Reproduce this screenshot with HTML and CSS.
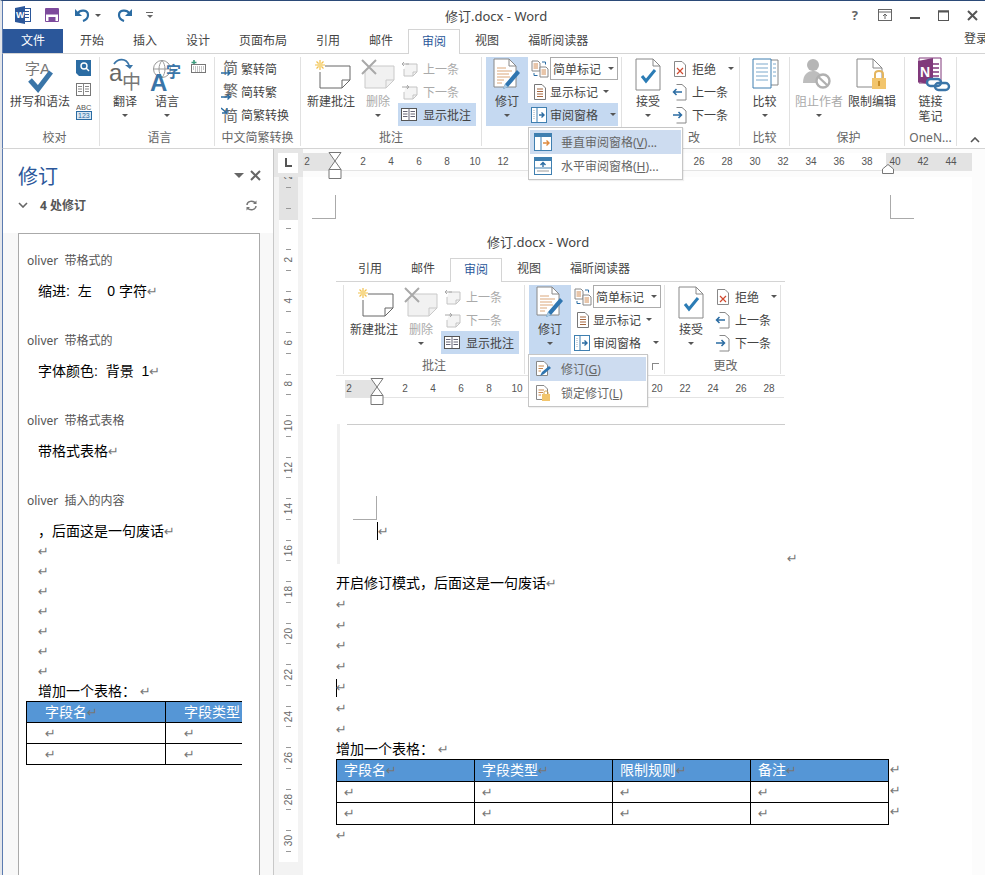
FILE: index.html
```html
<!DOCTYPE html>
<html lang="zh-CN">
<head>
<meta charset="utf-8">
<title>修订.docx - Word</title>
<link rel="stylesheet" href="styles.css">
</head>
<body>
<svg class="defs" xmlns="http://www.w3.org/2000/svg">
<symbol id="note-new" viewBox="0 0 40 36"><g fill="none" stroke="#f2c14e" stroke-width="1.2"><path d="M9 3V13M4 8H14M5.500 4.500L12.500 11.500M12.500 4.500L5.500 11.500"/></g><circle cx="9" cy="8" r="2.500" fill="#f7d98a"/><path d="M14 9H39V23L31 31H9V15M31 31V23H39" fill="none" stroke="#666"/></symbol>
<symbol id="note-del" viewBox="0 0 40 36"><path d="M12 9H36V23L28 31H7V14M28 31V23H36" fill="#f1f1f1" stroke="#c9c9c9"/><path d="M4 3L18 17M18 3L4 17" stroke="#a9a9a9" stroke-width="2"/></symbol>
<symbol id="note-prev" viewBox="0 0 20 18"><path d="M6 4H17V12L13 16H4V9M13 16V12H17" fill="#f4f4f4" stroke="#c4c4c4"/><path d="M9 4H2M4 2L2 4L4 6" fill="none" stroke="#a8a8a8"/></symbol>
<symbol id="note-next" viewBox="0 0 20 18"><path d="M6 4H17V12L13 16H4V9M13 16V12H17" fill="#f4f4f4" stroke="#c4c4c4"/><path d="M2 4H9M7 2L9 4L7 6" fill="none" stroke="#a8a8a8"/></symbol>
<symbol id="note-show" viewBox="0 0 16 14"><rect x=".5" y=".5" width="15" height="12" fill="#fff" stroke="#555"/><path d="M8 .5V12.500M2 3.500H6.500M2 6H6.500M2 8.500H6.500M9.500 3.500H14M9.500 6H14M9.500 8.500H14" stroke="#667"/></symbol>
<symbol id="track" viewBox="0 0 30 36"><path d="M2 2H17L24 9V30H2Z" fill="#fff" stroke="#888"/><path d="M17 2V9H24" fill="none" stroke="#888"/><path d="M5 11H14M5 14H20M5 17H17M5 20H18M5 23H12M5 26H10" stroke="#dba77a"/><path d="M11 32L13 27L25 13L28 16L16 30Z" fill="#2f75b0"/><path d="M11 32L13 27L16 30Z" fill="#a9c9e2"/></symbol>
<symbol id="simple" viewBox="0 0 18 18"><path d="M1 1H7L9 3V11H1Z" fill="#fff" stroke="#888"/><path d="M9 7H15L17 9V17H9Z" fill="#fff" stroke="#888"/><path d="M2.500 4H7M2.500 6H7M2.500 8H7M10.500 10H15M10.500 12H15M10.500 14H15" stroke="#d18c54"/><path d="M11 2H14.500V4.500M3 13V15.500H6.500" fill="none" stroke="#2b6ca3"/></symbol>
<symbol id="markup" viewBox="0 0 14 16"><path d="M1.500 .5H9L12.500 4V15.500H1.500Z" fill="#fff" stroke="#777"/><path d="M4 5H10M4 7.500H10M4 10H10M4 12.500H10" stroke="#a5673f"/></symbol>
<symbol id="pane" viewBox="0 0 16 16"><rect x=".5" y=".5" width="15" height="15" fill="#fff" stroke="#3f7fb0"/><path d="M6 .5V15.500" stroke="#3f7fb0"/><path d="M3 3V13" stroke="#9ab" stroke-dasharray="1 1"/><path d="M8 8H13M10.500 5.500L13 8L10.500 10.500" fill="none" stroke="#2b6ca3" stroke-width="1.400"/></symbol>
<symbol id="pane-v" viewBox="0 0 18 18"><rect x=".5" y=".5" width="17" height="17" fill="#fff" stroke="#3f7fb0"/><rect x="1" y="1" width="16" height="3" fill="#3f7fb0"/><path d="M7 4V17" stroke="#3f7fb0"/><path d="M9 10H15M12.500 7.500L15 10L12.500 12.500" fill="none" stroke="#e08b3e" stroke-width="1.400"/></symbol>
<symbol id="pane-h" viewBox="0 0 18 18"><rect x=".5" y=".5" width="17" height="17" fill="#fff" stroke="#3f7fb0"/><rect x="1" y="1" width="16" height="3" fill="#3f7fb0"/><path d="M1 11H17" stroke="#3f7fb0"/><path d="M9 10V5.500M6.500 8L9 5.500L11.500 8" fill="none" stroke="#2b6ca3" stroke-width="1.400"/><path d="M3 14H15" stroke="#999"/></symbol>
<symbol id="accept" viewBox="0 0 40 36"><path d="M8 2H25L32 9V33H8Z" fill="#fff" stroke="#888"/><path d="M25 2V9H32" fill="none" stroke="#888"/><path d="M14 19L18 24L27 13" fill="none" stroke="#2b7cb5" stroke-width="3"/></symbol>
<symbol id="reject" viewBox="0 0 16 16"><path d="M2.500 .5H10L13.500 4V15.500H2.500Z" fill="#fff" stroke="#888"/><path d="M5 7L11 13M11 7L5 13" stroke="#d0492f" stroke-width="1.200"/></symbol>
<symbol id="doc-prev" viewBox="0 0 16 18"><path d="M4.500 1.500H10L14 5V17H4.500" fill="#fff" stroke="#888"/><path d="M10 9H1.500M4.500 6L1.500 9L4.500 12" fill="none" stroke="#2b6ca3" stroke-width="1.500"/></symbol>
<symbol id="doc-next" viewBox="0 0 16 18"><path d="M4.500 1.500H10L14 5V17H4.500" fill="#fff" stroke="#888"/><path d="M1 9H9.500M6.500 6L9.500 9L6.500 12" fill="none" stroke="#2b6ca3" stroke-width="1.500"/></symbol>
<symbol id="compare" viewBox="0 0 40 36"><path d="M16 3H33V28H16Z" fill="#fff" stroke="#888"/><path d="M8 2H26V31H8Z" fill="#fff" stroke="#3f7fb0"/><path d="M11 7H23M11 11H23M11 15H23M11 19H23M11 23H23M28 7H31M28 11H31M28 15H31M28 19H31" stroke="#7ca9cc"/></symbol>
<symbol id="block" viewBox="0 0 52 36"><circle cx="20" cy="8" r="6" fill="#b5b5b5"/><path d="M10 26C10 17 15 14 20 14C24 14 27 16 28 19L23 26Z" fill="#bdbdbd"/><circle cx="30" cy="24" r="6.500" fill="#fff" stroke="#b0b0b0" stroke-width="2.400"/><path d="M25.500 20L34.500 28.500" stroke="#b0b0b0" stroke-width="2.400"/></symbol>
<symbol id="restrict" viewBox="0 0 52 36"><path d="M11 2H27L36 11V30H11Z" fill="#fff" stroke="#888"/><path d="M27 2V11H36" fill="none" stroke="#888"/><path d="M29 21V17C29 13 37 13 37 17V21" fill="none" stroke="#e3b45d" stroke-width="2"/><rect x="26" y="21" width="14" height="11" fill="#f2c56d"/><rect x="32" y="24" width="2" height="5" fill="#c98f2b"/></symbol>
<symbol id="onenote" viewBox="0 0 52 36"><path d="M14 1H36V26H14Z" fill="#fff" stroke="#80397b"/><path d="M28 7H34M28 11H34M28 15H34M28 19H34" stroke="#80397b" stroke-width="1.400"/><path d="M13 4L28 1V28L13 25Z" fill="#80397b"/><text class="svg-bold" x="15" y="20" font-size="14" fill="#fff">N</text><rect x="22" y="22" width="14" height="7" rx="3.500" fill="#fff" stroke="#3a75a8" stroke-width="2.400"/><rect x="30" y="26" width="14" height="7" rx="3.500" fill="none" stroke="#3a75a8" stroke-width="2.400"/></symbol>
<symbol id="menu-track" viewBox="0 0 18 18"><path d="M2.500 1.500H10L13.500 5V15.500H2.500Z" fill="#fff" stroke="#888"/><path d="M4.500 6H10M4.500 8.500H9M4.500 11H7" stroke="#c9884f"/><path d="M6 16L8 12L15 6L17 8L10 14Z" fill="#2f75b0"/></symbol>
<symbol id="menu-lock" viewBox="0 0 18 18"><path d="M2.500 1.500H10L13.500 5V15.500H2.500Z" fill="#fff" stroke="#888"/><path d="M4.500 6H10M4.500 8.500H9M4.500 11H7" stroke="#c9884f"/><rect x="8" y="10" width="8" height="7" fill="#f2c56d"/><path d="M10 10V8.500C10 6.500 14 6.500 14 8.500V10" fill="none" stroke="#d6a24a"/></symbol>
<symbol id="hourglass" viewBox="0 0 14 27"><path d="M1 .5H13L7 9ZM7 9L13 17.500V26.500H1V17.500ZM1 17.500H13" fill="#fff" stroke="#777"/></symbol>
</svg>

<div class="window">

<div class="titlebar">
	<svg class="qa qa-word" width="16" height="18" viewBox="0 0 16 18"><rect x="5.500" y="2.500" width="10" height="13" fill="#fff" stroke="#2b579a"/><path d="M10 5.500H14M10 8.500H14M10 11.500H14" stroke="#2b579a"/><path d="M0 2L10 0V18L0 16Z" fill="#2b579a"/><text class="svg-bold" x="1" y="12" font-size="9" fill="#fff">W</text></svg>
	<svg class="qa qa-save" width="14" height="14" viewBox="0 0 14 14"><path d="M.5.5H13.500V13.500H.5Z" fill="#fff" stroke="#7d4a9c"/><rect x="1" y="1" width="12" height="5.500" fill="#7d4a9c"/><rect x="3.500" y="9" width="7" height="4.500" fill="#7d4a9c"/></svg>
	<svg class="qa qa-undo" width="16" height="14" viewBox="0 0 16 14"><path d="M4 5C6 1.500 14 1.500 14 7C14 10 12 12 9 13" fill="none" stroke="#2b6ca3" stroke-width="2.200"/><path d="M1 1V8H8Z" fill="#2b6ca3"/></svg>
	<span class="caret qa-caret"></span>
	<svg class="qa qa-redo" width="16" height="14" viewBox="0 0 16 14"><path d="M12 5C10 1.500 2 1.500 2 7C2 10 4 12 7 13" fill="none" stroke="#2b6ca3" stroke-width="2.200"/><path d="M15 1V8H8Z" fill="#2b6ca3"/></svg>
	<span class="qa-more"></span>
	<div class="doc-title">修订.docx - Word</div>
	<div class="winbtns">
		<span class="help">?</span>
		<svg width="14" height="12" viewBox="0 0 14 12"><rect x=".5" y=".5" width="13" height="11" fill="none" stroke="#666"/><path d="M.5 3H13.500M7 10V5M5 7L7 5L9 7" fill="none" stroke="#666"/></svg>
		<svg width="10" height="12" viewBox="0 0 10 12"><path d="M0 9H10" stroke="#555" stroke-width="2"/></svg>
		<svg width="11" height="11" viewBox="0 0 11 11"><rect x=".5" y="1" width="10" height="9.500" fill="none" stroke="#555"/><path d="M0 1.500H11" stroke="#555" stroke-width="2"/></svg>
		<svg width="11" height="11" viewBox="0 0 11 11"><path d="M1 1L10 10M10 1L1 10" stroke="#555" stroke-width="2"/></svg>
	</div>
</div>

<div class="tabs">
	<div class="tab-file">文件</div>
	<div class="tab">开始</div>
	<div class="tab">插入</div>
	<div class="tab">设计</div>
	<div class="tab">页面布局</div>
	<div class="tab">引用</div>
	<div class="tab">邮件</div>
	<div class="tab active">审阅</div>
	<div class="tab">视图</div>
	<div class="tab">福昕阅读器</div>
	<div class="tab-login">登录</div>
</div>

<div class="ribbon">
	<div class="grp g-proof">
		<div class="grp-body">
			<div class="big w-spell">
				<svg width="60" height="36" viewBox="0 0 60 36"><text class="svg-text" x="15" y="17" font-size="15" fill="#777">字A</text><path d="M20 23L28 32L41 15" fill="none" stroke="#3a75a8" stroke-width="5"/></svg>
				<span class="label">拼写和语法</span>
			</div>
			<div class="mini-col">
				<svg width="15" height="16" viewBox="0 0 15 16"><path d="M0 0H15V16H3L0 13Z" fill="#2b6ca3"/><circle cx="8" cy="6" r="3" fill="none" stroke="#fff" stroke-width="1.400"/><path d="M10 8L13 11" stroke="#fff" stroke-width="1.400"/></svg>
				<svg width="15" height="13" viewBox="0 0 15 13"><rect x=".5" y=".5" width="14" height="12" fill="#fff" stroke="#777"/><path d="M7.500 .5V12.500M2 3.500H6M2 6H6M2 8.500H6M9 3.500H13M9 6H13M9 8.500H13" stroke="#888"/></svg>
				<svg width="16" height="17" viewBox="0 0 16 17"><text class="svg-text" x="0" y="7" font-size="7.500" fill="#555">ABC</text><rect x=".5" y="8.500" width="15" height="8" fill="#d8e7f3" stroke="#2b6ca3"/><text class="svg-text" x="2" y="15" font-size="7" fill="#2b6ca3">123</text></svg>
			</div>
		</div>
		<div class="grp-label">校对</div>
	</div>
	<div class="grp g-lang">
		<div class="grp-body">
			<div class="big w-40">
				<svg width="40" height="36" viewBox="0 0 40 36"><text class="svg-text" x="4" y="24" font-size="24" fill="#666">a</text><text class="svg-text" x="17" y="32" font-size="19" fill="#777">中</text><path d="M9 7C13 1 21 1 24 8" fill="none" stroke="#3a75a8" stroke-width="1.800"/><path d="M20 8H28L25 12Z" fill="#3a75a8"/></svg>
				<span class="label">翻译</span>
				<span class="caret"></span>
			</div>
			<div class="big w-44">
				<svg width="44" height="36" viewBox="0 0 44 36"><circle cx="17" cy="12" r="8.500" fill="none" stroke="#999"/><path d="M8.500 12H26M17 3.500C13 8 13 16 17 20.500M17 3.500C21 8 21 16 17 20.500" fill="none" stroke="#999"/><text class="svg-bold" x="5" y="34" font-size="24" fill="#3a75a8">A</text><text class="svg-bold" x="21" y="20" font-size="15" fill="#3a75a8">字</text></svg>
				<span class="label">语言</span>
				<span class="caret"></span>
			</div>
			<div class="mini-col kbd">
				<svg width="15" height="13" viewBox="0 0 15 13"><path d="M3 0V5M.5 2.500H5.500" stroke="#3b9a7c" stroke-width="1.600"/><rect x=".5" y="4.500" width="14" height="8" fill="#fff" stroke="#777"/><path d="M2 7H13M2 9H13M4 11H11" stroke="#888" stroke-dasharray="1 1"/></svg>
			</div>
		</div>
		<div class="grp-label">语言</div>
	</div>
	<div class="grp g-conv">
		<div class="grp-body">
			<div class="rows">
				<div class="row"><svg width="17" height="20" viewBox="0 0 17 20"><text class="svg-text" x="2" y="14" font-size="15" fill="#666">简</text><path d="M0 14H9M6.500 11.500L9 14L6.500 16.500" fill="none" stroke="#2b6ca3" stroke-width="1.400"/></svg><span>繁转简</span></div>
				<div class="row"><svg width="17" height="20" viewBox="0 0 17 20"><text class="svg-text" x="2" y="14" font-size="15" fill="#666">繁</text><path d="M0 15H9M6.500 12.500L9 15L6.500 17.500" fill="none" stroke="#2b6ca3" stroke-width="1.400"/></svg><span>简转繁</span></div>
				<div class="row"><svg width="17" height="20" viewBox="0 0 17 20"><text class="svg-text" x="2" y="16" font-size="15" fill="#666">简</text><path d="M0 3L6 8M6 3V8H1" fill="none" stroke="#2b6ca3" stroke-width="1.400"/></svg><span>简繁转换</span></div>
			</div>
		</div>
		<div class="grp-label">中文简繁转换</div>
	</div>
	<div class="grp g-note">
		<div class="grp-body">
			<div class="big w-52">
				<svg width="40" height="36"><use href="#note-new"/></svg>
				<span class="label">新建批注</span>
			</div>
			<div class="big w-42 off">
				<svg width="40" height="36"><use href="#note-del"/></svg>
				<span class="label">删除</span>
				<span class="caret"></span>
			</div>
			<div class="rows">
				<div class="row off"><svg width="20" height="18"><use href="#note-prev"/></svg><span>上一条</span></div>
				<div class="row off"><svg width="20" height="18"><use href="#note-next"/></svg><span>下一条</span></div>
				<div class="row on"><svg class="ic-show" width="16" height="14"><use href="#note-show"/></svg><span>显示批注</span></div>
			</div>
		</div>
		<div class="grp-label">批注</div>
	</div>
	<div class="grp g-track">
		<div class="grp-body">
			<div class="big w-42 on">
				<svg width="30" height="36"><use href="#track"/></svg>
				<span class="label">修订</span>
				<span class="caret"></span>
			</div>
			<div class="rows r-track">
				<div class="row"><svg width="18" height="18"><use href="#simple"/></svg><span class="select">简单标记<span class="caret"></span></span></div>
				<div class="row"><svg class="ic-pad" width="14" height="16"><use href="#markup"/></svg><span>显示标记</span><span class="caret caret-near"></span></div>
				<div class="row on"><svg width="16" height="16"><use href="#pane"/></svg><span>审阅窗格</span><span class="caret caret-far"></span></div>
			</div>
		</div>
		<div class="grp-label"></div>
		<div class="menu menu-main">
			<div class="menu-item hot"><svg width="18" height="18"><use href="#pane-v"/></svg><span>垂直审阅窗格(<u>V</u>)...</span></div>
			<div class="menu-item"><svg width="18" height="18"><use href="#pane-h"/></svg><span>水平审阅窗格(<u>H</u>)...</span></div>
		</div>
	</div>
	<div class="grp g-change">
		<div class="grp-body">
			<div class="big w-40">
				<svg width="40" height="36"><use href="#accept"/></svg>
				<span class="label">接受</span>
				<span class="caret"></span>
			</div>
			<div class="rows r-change">
				<div class="row"><svg width="16" height="16"><use href="#reject"/></svg><span>拒绝</span><span class="caret caret-reject"></span></div>
				<div class="row"><svg width="16" height="18"><use href="#doc-prev"/></svg><span>上一条</span></div>
				<div class="row"><svg width="16" height="18"><use href="#doc-next"/></svg><span>下一条</span></div>
			</div>
		</div>
		<div class="grp-label grp-label-cut">改</div>
	</div>
	<div class="grp g-comp">
		<div class="grp-body">
			<div class="big w-fill">
				<svg width="40" height="36"><use href="#compare"/></svg>
				<span class="label">比较</span>
				<span class="caret"></span>
			</div>
		</div>
		<div class="grp-label">比较</div>
	</div>
	<div class="grp g-prot">
		<div class="grp-body">
			<div class="big w-52 off">
				<svg width="52" height="36"><use href="#block"/></svg>
				<span class="label">阻止作者</span>
				<span class="caret"></span>
			</div>
			<div class="big w-52">
				<svg width="52" height="36"><use href="#restrict"/></svg>
				<span class="label">限制编辑</span>
			</div>
		</div>
		<div class="grp-label">保护</div>
	</div>
	<div class="grp g-one">
		<div class="grp-body">
			<div class="big w-fill">
				<svg width="52" height="36"><use href="#onenote"/></svg>
				<span class="label">链接</span>
				<span class="label">笔记</span>
			</div>
		</div>
		<div class="grp-label">OneN...</div>
	</div>
	<svg class="collapse" width="10" height="6" viewBox="0 0 10 6"><path d="M1 5L5 1L9 5" fill="none" stroke="#555" stroke-width="1.600"/></svg>
</div>

<div class="work">
	<div class="side">
		<div class="side-title">
			<span>修订</span>
			<span class="side-drop"></span>
			<svg width="11" height="11" viewBox="0 0 11 11"><path d="M1 1L10 10M10 1L1 10" stroke="#666" stroke-width="2"/></svg>
		</div>
		<div class="side-count">
			<svg width="10" height="6" viewBox="0 0 10 6"><path d="M1 1L5 5L9 1" fill="none" stroke="#666" stroke-width="1.600"/></svg>
			<span>4 处修订</span>
			<svg class="refresh" width="11" height="11" viewBox="0 0 11 11"><path d="M1 5C1 1 7 0 9.500 3M10 6C10 10 4 11 1.500 8" fill="none" stroke="#777" stroke-width="1.500"/><path d="M10.500 .5V4H7ZM.5 10.500V7H4Z" fill="#777"/></svg>
		</div>
		<div class="side-box">
			<div class="rev-head">oliver  带格式的</div>
			<div class="rev-body">缩进:  左    0 字符<span class="ret">↵</span></div>
			<div class="rev-head">oliver  带格式的</div>
			<div class="rev-body">字体颜色:  背景  1<span class="ret">↵</span></div>
			<div class="rev-head">oliver  带格式表格</div>
			<div class="rev-body">带格式表格<span class="ret">↵</span></div>
			<div class="rev-head">oliver  插入的内容</div>
			<div class="rev-line">，后面这是一句废话<span class="ret">↵</span></div>
			<div class="rev-line"><span class="ret">↵</span></div>
			<div class="rev-line"><span class="ret">↵</span></div>
			<div class="rev-line"><span class="ret">↵</span></div>
			<div class="rev-line"><span class="ret">↵</span></div>
			<div class="rev-line"><span class="ret">↵</span></div>
			<div class="rev-line"><span class="ret">↵</span></div>
			<div class="rev-line"><span class="ret">↵</span></div>
			<div class="rev-line">增加一个表格： <span class="ret">↵</span></div>
			<table class="side-table">
				<tr class="head"><td>字段名<span class="ret">↵</span></td><td>字段类型</td></tr>
				<tr><td><span class="ret">↵</span></td><td><span class="ret">↵</span></td></tr>
				<tr><td><span class="ret">↵</span></td><td><span class="ret">↵</span></td></tr>
			</table>
		</div>
	</div>

	<div class="canvas">
		<div class="hr-row">
			<div class="corner"><div class="corner-box"><span class="tabstop"></span></div></div>
			<div class="hruler">
				<span>2</span><span></span><span>2</span><span>4</span><span>6</span><span>8</span><span>10</span><span>12</span><span></span><span></span><span></span><span></span><span></span><span></span><span>26</span><span>28</span><span>30</span><span>32</span><span>34</span><span>36</span><span>38</span><span>40</span><span>42</span><span>44</span>
				<svg class="hourglass" width="14" height="27"><use href="#hourglass"/></svg>
				<svg class="right-mark" width="12" height="10" viewBox="0 0 12 10"><path d="M6 .5L11.500 5V9.500H.5V5Z" fill="#fff" stroke="#777"/></svg>
			</div>
		</div>
		<div class="canvas-body">
			<div class="vruler">
				<div class="vcell"><span>2</span></div><div class="vcell"><span></span></div><div class="vcell"><span>2</span></div><div class="vcell"><span>4</span></div><div class="vcell"><span>6</span></div><div class="vcell"><span>8</span></div><div class="vcell"><span>10</span></div><div class="vcell"><span>12</span></div><div class="vcell"><span>14</span></div><div class="vcell"><span>16</span></div><div class="vcell"><span>18</span></div><div class="vcell"><span>20</span></div><div class="vcell"><span>22</span></div><div class="vcell"><span>24</span></div><div class="vcell"><span>26</span></div><div class="vcell"><span>28</span></div><div class="vcell"><span>30</span></div>
			</div>
			<div class="page">
				<div class="crops">
					<div class="crop crop-l"></div>
					<div class="crop crop-r"></div>
				</div>
				<div class="shot">
					<div class="shot-title">修订.docx - Word</div>
					<div class="tabs shot-tabs">
						<div class="tab">引用</div>
						<div class="tab">邮件</div>
						<div class="tab active">审阅</div>
						<div class="tab">视图</div>
						<div class="tab">福昕阅读器</div>
					</div>
					<div class="ribbon shot-ribbon">
						<div class="grp g-note first">
							<div class="grp-body">
								<div class="big w-52">
									<svg width="40" height="36"><use href="#note-new"/></svg>
									<span class="label">新建批注</span>
								</div>
								<div class="big w-42 off">
									<svg width="40" height="36"><use href="#note-del"/></svg>
									<span class="label">删除</span>
									<span class="caret"></span>
								</div>
								<div class="rows">
									<div class="row off"><svg width="20" height="18"><use href="#note-prev"/></svg><span>上一条</span></div>
									<div class="row off"><svg width="20" height="18"><use href="#note-next"/></svg><span>下一条</span></div>
									<div class="row on"><svg class="ic-show" width="16" height="14"><use href="#note-show"/></svg><span>显示批注</span></div>
								</div>
							</div>
							<div class="grp-label">批注</div>
						</div>
						<div class="grp g-track">
							<div class="grp-body">
								<div class="big w-42 on">
									<svg width="30" height="36"><use href="#track"/></svg>
									<span class="label">修订</span>
									<span class="caret"></span>
								</div>
								<div class="rows r-track">
									<div class="row"><svg width="18" height="18"><use href="#simple"/></svg><span class="select">简单标记<span class="caret"></span></span></div>
									<div class="row"><svg class="ic-pad" width="14" height="16"><use href="#markup"/></svg><span>显示标记</span><span class="caret caret-near"></span></div>
									<div class="row"><svg width="16" height="16"><use href="#pane"/></svg><span>审阅窗格</span><span class="caret caret-far"></span></div>
								</div>
							</div>
							<div class="launcher"></div>
							<div class="menu menu-shot">
								<div class="menu-item hot"><svg width="18" height="18"><use href="#menu-track"/></svg><span>修订(<u>G</u>)</span></div>
								<div class="menu-item"><svg width="18" height="18"><use href="#menu-lock"/></svg><span>锁定修订(<u>L</u>)</span></div>
							</div>
						</div>
						<div class="grp g-change">
							<div class="grp-body">
								<div class="big w-40">
									<svg width="40" height="36"><use href="#accept"/></svg>
									<span class="label">接受</span>
									<span class="caret"></span>
								</div>
								<div class="rows r-change">
									<div class="row"><svg width="16" height="16"><use href="#reject"/></svg><span>拒绝</span><span class="caret caret-reject"></span></div>
									<div class="row"><svg width="16" height="18"><use href="#doc-prev"/></svg><span>上一条</span></div>
									<div class="row"><svg width="16" height="18"><use href="#doc-next"/></svg><span>下一条</span></div>
								</div>
							</div>
							<div class="grp-label">更改</div>
						</div>
					</div>
					<div class="shot-ruler">
						<div class="hruler">
							<span>2</span><span></span><span>2</span><span>4</span><span>6</span><span>8</span><span>10</span><span></span><span></span><span></span><span></span><span>20</span><span>22</span><span>24</span><span>26</span><span>28</span>
							<svg class="hourglass" width="14" height="27"><use href="#hourglass"/></svg>
						</div>
					</div>
					<div class="shot-page">
						<div class="crop crop-shot"></div>
						<div class="shot-cursor"><i class="cursor"></i><span class="ret">↵</span></div>
						<div class="shot-end"><span class="ret">↵</span></div>
					</div>
				</div>
				<div class="text">
					<p>开启修订模式，后面这是一句废话<span class="ret">↵</span></p>
					<p><span class="ret">↵</span></p>
					<p><span class="ret">↵</span></p>
					<p><span class="ret">↵</span></p>
					<p><span class="ret">↵</span></p>
					<p><i class="cursor cursor-line"></i><span class="ret">↵</span></p>
					<p><span class="ret">↵</span></p>
					<p><span class="ret">↵</span></p>
					<p>增加一个表格： <span class="ret">↵</span></p>
					<div class="table-wrap">
						<table class="doc-table">
							<tr class="head"><td>字段名<span class="ret">↵</span></td><td>字段类型<span class="ret">↵</span></td><td>限制规则<span class="ret">↵</span></td><td>备注<span class="ret">↵</span></td></tr>
							<tr><td><span class="ret">↵</span></td><td><span class="ret">↵</span></td><td><span class="ret">↵</span></td><td><span class="ret">↵</span></td></tr>
							<tr><td><span class="ret">↵</span></td><td><span class="ret">↵</span></td><td><span class="ret">↵</span></td><td><span class="ret">↵</span></td></tr>
						</table>
						<div class="row-ends"><span class="ret">↵</span><span class="ret">↵</span><span class="ret">↵</span></div>
					</div>
					<p><span class="ret">↵</span></p>
				</div>
			</div>
		</div>
	</div>
</div>

</div>
</body>
</html>
```

FILE: styles.css
```css
* {
	box-sizing: border-box;
}
html, body {
	margin: 0;
	padding: 0;
	background: #fff;
}
body {
	width: 985px;
	height: 875px;
	overflow: hidden;
	font-family: "Noto Sans", "Noto Sans CJK SC", sans-serif;
	font-size: 12px;
	color: #444;
}
.defs {
	display: none;
}
.svg-text {
	font-family: "Liberation Sans", "Noto Sans CJK SC", sans-serif;
}
.svg-bold {
	font-family: "Liberation Sans", "Noto Sans CJK SC", sans-serif;
	font-weight: bold;
}
.window {
	width: 985px;
	height: 875px;
	display: flex;
	flex-direction: column;
	border-top: 1px solid #2b4a78;
	border-left: 2px solid #e4e6ea;
	overflow: hidden;
}

/* title bar */
.titlebar {
	height: 28px;
	display: flex;
	align-items: center;
	position: relative;
	padding-left: 12px;
	border-left: 1px solid #5b7bb0;
	flex: none;
}
.qa-word {
	margin-right: 14px;
}
.qa-save {
	margin-right: 15px;
}
.qa-undo {
	margin-right: 5px;
}
.qa-caret {
	margin: 0 16px 0 0;
}
.qa-redo {
	margin-right: 13px;
}
.qa-more {
	width: 7px;
	height: 6px;
	border-top: 1px solid #666;
	position: relative;
}
.qa-more:after {
	content: "";
	position: absolute;
	left: 1px;
	top: 2px;
	border: 3px solid transparent;
	border-top: 3px solid #666;
}
.doc-title {
	position: absolute;
	left: 442px;
	width: 101px;
	text-align: center;
	font-size: 13px;
	white-space: nowrap;
	color: #444;
}
.winbtns {
	margin-left: auto;
	display: flex;
	align-items: center;
	gap: 18px;
	padding-right: 7px;
}
.help {
	font-weight: bold;
	font-size: 13px;
	color: #666;
	margin-right: 2px;
}

/* tabs */
.tabs {
	height: 25px;
	display: flex;
	gap: 1px;
	border-bottom: 1px solid #d4d4d4;
	border-left: 1px solid #5b7bb0;
	flex: none;
}
.tab-file {
	width: 60px;
	height: 24px;
	background: #2b579a;
	color: #fff;
	line-height: 24px;
	text-align: center;
	margin-right: 2px;
}
.tab {
	height: 25px;
	padding: 0 14px;
	line-height: 24px;
	white-space: nowrap;
}
.tab.active {
	background: #fff;
	border: 1px solid #d4d4d4;
	border-bottom: 0;
	color: #2b579a;
	padding: 0 13px;
}
.tab-login {
	margin-left: auto;
	margin-right: -3px;
	line-height: 20px;
	white-space: nowrap;
}

/* ribbon */
.ribbon {
	height: 95px;
	display: flex;
	border-bottom: 1px solid #d4d4d4;
	border-left: 1px solid #5b7bb0;
	position: relative;
	flex: none;
}
.grp {
	height: 89px;
	margin-top: 3px;
	border-right: 1px solid #e1e1e1;
	display: flex;
	flex-direction: column;
	position: relative;
	flex: none;
}
.grp-body {
	height: 72px;
	display: flex;
}
.grp-label {
	height: 16px;
	margin-top: 1px;
	line-height: 16px;
	text-align: center;
	color: #666;
	white-space: nowrap;
}
.g-proof {
	width: 97px;
	padding-left: 7px;
}
.g-lang {
	width: 115px;
	padding-left: 5px;
}
.g-conv {
	width: 86px;
	padding-left: 6px;
}
.g-conv .row {
	gap: 3px;
}
.g-conv .grp-label {
	margin-left: -6px;
}
.g-note {
	width: 181px;
	padding-left: 4px;
}
.g-note .grp-label {
	margin-left: -4px;
}
.g-track {
	width: 140px;
	padding-left: 4px;
}
.g-change {
	width: 118px;
	padding-left: 6px;
}
.grp-label-cut {
	padding-left: 66px;
	margin-left: -6px;
	text-align: left;
}
.g-comp {
	width: 50px;
}
.g-prot {
	width: 115px;
	padding-left: 3px;
}
.g-prot .grp-body {
	gap: 1px;
}
.g-one {
	width: 52px;
}
.big {
	height: 69px;
	display: flex;
	flex-direction: column;
	align-items: center;
	flex: none;
}
.big svg {
	height: 36px;
	flex: none;
}
.big .label {
	margin-top: 1px;
	line-height: 15px;
	white-space: nowrap;
}
.big .label + .label {
	margin-top: 0;
}
.big .caret {
	margin-top: 5px;
}
.w-spell {
	width: 60px;
}
.w-40 {
	width: 40px;
}
.w-42 {
	width: 42px;
}
.w-44 {
	width: 44px;
}
.w-52 {
	width: 52px;
}
.w-fill {
	width: 100%;
}
.caret {
	display: inline-block;
	width: 0;
	height: 0;
	border: 3px solid transparent;
	border-top: 3px solid #555;
	border-bottom: 0;
}
.mini-col {
	margin-left: 6px;
	height: 69px;
	display: flex;
	flex-direction: column;
	align-items: flex-start;
	padding-top: 3px;
	gap: 7px;
}
.kbd {
	margin-left: 2px;
}
.rows {
	display: flex;
	flex-direction: column;
	flex: none;
}
.row {
	height: 23px;
	display: flex;
	align-items: center;
	gap: 3px;
	white-space: nowrap;
}
.g-note .rows {
	width: 78px;
	margin-left: -1px;
}
.g-note .row {
	padding-left: 2px;
}
.ic-show {
	margin: 0 3px 0 1px;
}
.r-track {
	width: 90px;
}
.r-track .row {
	gap: 3px;
	padding-left: 3px;
}
.r-track .select {
	width: 68px;
	height: 23px;
	border: 1px solid #ababab;
	padding-left: 2px;
	margin-left: -2px;
	display: flex;
	align-items: center;
	gap: 7px;
	background: #fff;
}
.ic-pad {
	margin: 0 0 0 2px;
}
.caret-near {
	margin-left: 2px;
}
.caret-far {
	margin-left: 9px;
}
.r-change {
	margin-left: 3px;
}
.r-change .row {
	gap: 4px;
	padding-left: 1px;
}
.caret-reject {
	margin-left: 8px;
}
.on {
	background: #c5d9f1;
}
.off {
	color: #aaa;
}
.collapse {
	position: absolute;
	right: 5px;
	bottom: 5px;
}

/* dropdown menus */
.menu {
	position: absolute;
	background: #fff;
	border: 1px solid #c6c6c6;
	padding: 2px 1px;
	height: 53px;
	z-index: 5;
	color: #666;
	box-shadow: 1px 1px 1px rgba(0,0,0,0.06);
}
.menu-main {
	left: 46px;
	top: 70px;
	width: 155px;
}
.menu-shot {
	left: 3px;
	top: 69px;
	width: 120px;
}
.menu-item {
	height: 24px;
	display: flex;
	align-items: center;
	padding-left: 4px;
	gap: 9px;
	white-space: nowrap;
}
.menu-item.hot {
	background: #cddcf0;
}
.launcher {
	position: absolute;
	right: 5px;
	bottom: 4px;
	width: 7px;
	height: 7px;
	border-left: 1px solid #888;
	border-top: 1px solid #888;
}

/* work area */
.work {
	flex: 1;
	display: flex;
	min-height: 0;
	border-left: 1px solid #5b7bb0;
}
.side {
	width: 271px;
	flex: none;
	border-right: 1px solid #c8c8c8;
	background: #f8f8f8;
	overflow: hidden;
}
.side-title {
	height: 46px;
	display: flex;
	align-items: center;
	padding: 6px 0 0 15px;
	background: #fff;
	font-size: 20px;
	color: #2b579a;
}
.side-drop {
	width: 0;
	height: 0;
	border: 5px solid transparent;
	border-top: 5px solid #666;
	border-bottom: 0;
	margin-left: 176px;
	margin-right: 6px;
}
.side-count {
	height: 38px;
	padding: 0 16px 18px 15px;
	background: #fff;
	display: flex;
	align-items: center;
	gap: 12px;
	font-weight: bold;
	color: #555;
	white-space: nowrap;
}
.refresh {
	margin-left: auto;
}
.side-box {
	margin-left: 15px;
	width: 242px;
	height: 700px;
	background: #fff;
	border: 1px solid #aaa;
	padding: 17px 0 0 8px;
	font-family: "Liberation Sans", "Noto Sans CJK SC", sans-serif;
	color: #000;
	font-size: 14px;
}
.rev-head {
	height: 20px;
	line-height: 20px;
	font-family: "Noto Sans", "Noto Sans CJK SC", sans-serif;
	font-size: 12px;
	color: #555;
	white-space: pre;
	margin-bottom: 10px;
}
.rev-body {
	height: 20px;
	line-height: 20px;
	padding-left: 11px;
	margin-bottom: 30px;
	white-space: pre;
}
.rev-line {
	height: 20px;
	line-height: 20px;
	padding-left: 11px;
	white-space: pre;
}
.ret {
	font-family: "DejaVu Sans", sans-serif;
	font-size: 13px;
	line-height: 1;
	color: #777;
}
.side-table {
	border-collapse: collapse;
	table-layout: fixed;
	width: 216px;
	margin-left: -1px;
}
.side-table td {
	height: 21px;
	padding: 0 0 0 18px;
	line-height: 18px;
	border-top: 1px solid #000;
	border-bottom: 1px solid #000;
	white-space: nowrap;
	overflow: hidden;
}
.side-table td:first-child {
	width: 139px;
	border-left: 1px solid #000;
	border-right: 1px solid #000;
}
.head td {
	background: #5596d6;
	color: #fff;
}

/* canvas and rulers */
.canvas {
	flex: 1;
	min-width: 0;
	display: flex;
	flex-direction: column;
	background: #fcfcfc;
}
.hr-row {
	height: 28px;
	display: flex;
	flex: none;
}
.corner {
	width: 29px;
	height: 28px;
	background: #e6e6e6;
	padding: 4px 5px 4px 4px;
	flex: none;
}
.corner-box {
	height: 20px;
	background: #fff;
	position: relative;
}
.tabstop {
	position: absolute;
	left: 7px;
	top: 5px;
	width: 7px;
	height: 9px;
	border-left: 2px solid #555;
	border-bottom: 2px solid #555;
}
.hruler {
	width: 669px;
	height: 18px;
	margin-top: 4px;
	display: flex;
	position: relative;
	background: linear-gradient(to right, #e3e3e3 32px, #fff 32px, #fff 583px, #e3e3e3 583px);
	border-bottom: 1px solid #e4e4e4;
	font-family: "Liberation Sans", sans-serif;
	font-size: 10px;
	color: #555;
	line-height: 17px;
}
.hruler > span {
	width: 28px;
	flex: none;
	text-align: center;
}
.hruler > span:first-child {
	margin-left: -10px;
}
.hourglass {
	position: absolute;
	left: 25px;
	top: -1px;
	z-index: 2;
}
.right-mark {
	position: absolute;
	left: 579px;
	top: 11px;
}
.canvas-body {
	flex: 1;
	min-height: 0;
	display: flex;
}
.vruler {
	width: 29px;
	flex: none;
	background: #f3f3f3;
	padding: 0 5px;
	overflow: hidden;
}
.vcell {
	height: 41.500px;
	display: flex;
	align-items: center;
	justify-content: center;
	position: relative;
	font-family: "Liberation Sans", sans-serif;
	font-size: 10px;
	color: #666;
	background: #fff;
}
.vcell:first-child {
	margin-top: -21px;
	background: #e3e3e3;
}
.vcell:nth-child(2) {
	background: linear-gradient(to bottom, #e3e3e3 22px, #fff 22px);
}
.vcell span {
	writing-mode: vertical-rl;
	transform: rotate(180deg);
}
.vcell:before, .vcell:after {
	content: "";
	position: absolute;
	left: 7px;
	width: 5px;
	border-top: 1px solid #999;
}
.vcell:before {
	top: 10px;
}
.vcell:after {
	bottom: 10px;
}
.page {
	width: 669px;
	flex: none;
	background: #fff;
	overflow: hidden;
}
.crops {
	display: flex;
	justify-content: space-between;
	padding: 18px 58px 0 9px;
	height: 42px;
}
.crop {
	width: 24px;
	height: 24px;
}
.crop-l {
	border-right: 1px solid #aaa;
	border-bottom: 1px solid #aaa;
}
.crop-r {
	border-left: 1px solid #aaa;
	border-bottom: 1px solid #aaa;
}

/* picture pasted in the document */
.shot {
	margin: 14px 0 0 33px;
	width: 449px;
	height: 340px;
	position: relative;
}
.shot-title {
	height: 20px;
	line-height: 19px;
	padding-left: 151px;
	font-size: 13px;
	white-space: nowrap;
	margin-bottom: 5px;
}
.shot-tabs {
	height: 24px;
	padding-left: 8px;
	border-left: 0;
}
.shot-tabs .tab {
	height: 24px;
	line-height: 22px;
}
.shot-ribbon {
	height: 94px;
	border-left: 0;
	border-bottom: 1px solid #e4e4e4;
	padding-left: 7px;
}
.shot-ribbon .g-note.first {
	border-left: 1px solid #e1e1e1;
	width: 182px;
}
.shot-ribbon .g-change {
	width: 116px;
}
.shot-ruler {
	height: 30px;
	padding-left: 9px;
	overflow: hidden;
}
.shot-ruler .hruler {
	width: 439px;
	margin-top: 4px;
	background: linear-gradient(to right, #e3e3e3 32px, #fff 32px);
}
.shot-ruler .hourglass {
	top: -2px;
}
.shot-page {
	margin-top: 18px;
	height: 140px;
	margin-left: 1px;
	border-left: 3px solid #f0f0f0;
	position: relative;
	padding-left: 13px;
}
.shot-page:before {
	content: "";
	display: block;
	width: 438px;
	margin-left: -6px;
	border-top: 1px solid #ccc;
}
.crop-shot {
	margin: 71px 0 0 0;
	width: 24px;
	height: 24px;
	border-right: 1px solid #aaa;
	border-bottom: 1px solid #aaa;
}
.shot-cursor {
	height: 18px;
	margin: 2px 0 0 24px;
	display: flex;
	align-items: center;
}
.cursor {
	display: inline-block;
	width: 1px;
	height: 18px;
	background: #000;
}
.shot-end {
	margin: 12px 0 0 434px;
	line-height: 12px;
}
.text {
	margin: 0 0 0 33px;
	font-family: "Liberation Sans", "Noto Sans CJK SC", sans-serif;
	font-size: 14px;
	color: #000;
}
.text p {
	margin: 0;
	height: 20.800px;
	line-height: 20.800px;
	white-space: pre;
	position: relative;
}
.cursor-line {
	vertical-align: middle;
	margin-right: -1px;
}
.table-wrap {
	display: flex;
	margin-top: -1px;
}
.doc-table {
	border-collapse: collapse;
	table-layout: fixed;
	width: 553px;
	flex: none;
}
.doc-table td {
	height: 21.500px;
	padding: 0 0 0 7px;
	border: 1px solid #000;
	line-height: 18px;
}
.row-ends {
	display: flex;
	flex-direction: column;
	width: 12px;
	padding: 4px 0 0 1px;
	gap: 8px;
}
```
